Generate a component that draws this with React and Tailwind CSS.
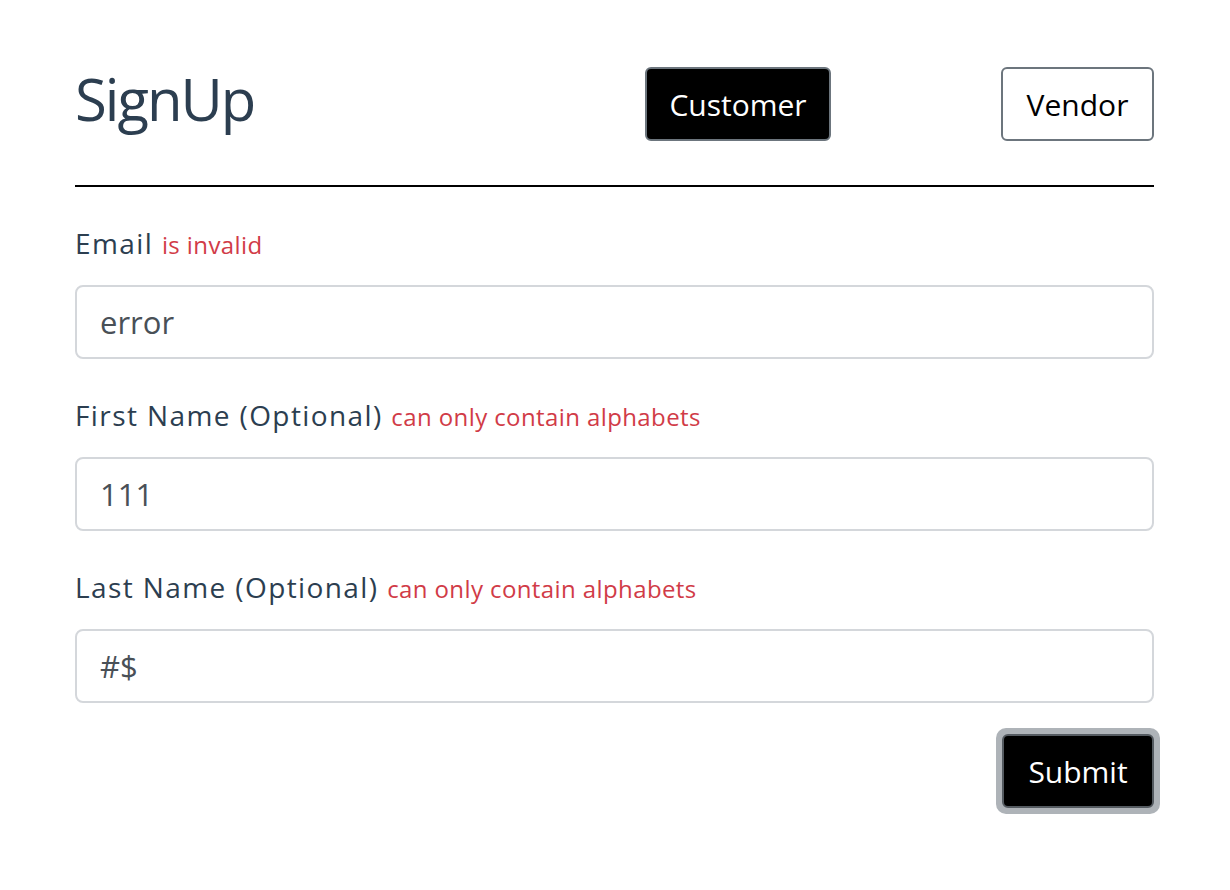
import React from 'react';

const Field = ({ label, error, value }) => (
  <div className="flex flex-col">
    <label className="text-[28px] leading-[36px] tracking-[1.4px] text-[#2c3e50]">
      {label} <span className="text-[24px] leading-none tracking-[0.4px] text-[#d13b47]">{error}</span>
    </label>
    <input
      readOnly
      value={value}
      className="mt-[24px] h-[74px] w-full rounded-[8px] border-2 border-[#d4d7db] px-[23px] text-[31px] text-[#495057] outline-none"
    />
  </div>
);

const App = () => {
  return (
    <div className="min-h-screen w-full bg-white font-['Open_Sans',sans-serif]">
      <div className="mx-[75px] w-[1079px] pt-[67px]">
        {/* Header */}
        <div className="flex h-[74px] items-start">
          <h1 className="w-[570px] text-[58px] leading-[64px] tracking-[-2px] text-[#2c3e50]">SignUp</h1>
          <button className="h-[74px] w-[186px] rounded-[6px] border-2 border-[#6c757d] bg-black text-[30px] text-white">
            Customer
          </button>
          <div className="flex-1" />
          <button className="h-[74px] w-[153px] rounded-[6px] border-2 border-[#6c757d] bg-white text-[30px] text-black">
            Vendor
          </button>
        </div>

        <div className="mt-[44px] h-[2px] w-full bg-black" />

        <div className="mt-[38px] flex flex-col gap-[38px]">
          <Field label="Email" error="is invalid" value="error" />
          <Field label="First Name (Optional)" error="can only contain alphabets" value="111" />
          <Field label="Last Name (Optional)" error="can only contain alphabets" value="#$" />
        </div>

        <div className="mt-[25px] flex justify-end">
          <div className="-mr-[6px] rounded-[10px] bg-[#aeb3b8] p-[6px]">
            <button className="h-[74px] w-[152px] rounded-[6px] border-2 border-[#555b61] bg-black text-[30px] text-white">
              Submit
            </button>
          </div>
        </div>
      </div>
    </div>
  );
};

export default App;
